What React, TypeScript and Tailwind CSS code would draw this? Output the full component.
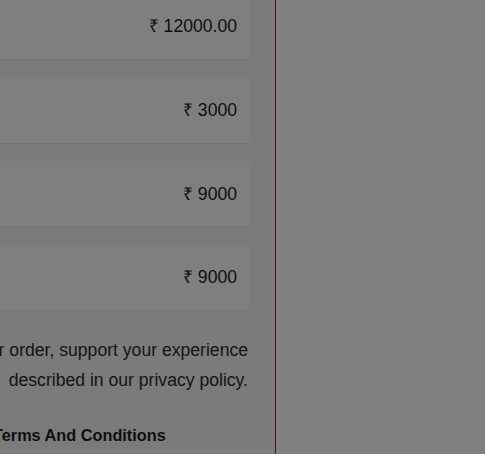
import React from "react";

const prices = ["₹ 12000.00", "₹ 3000", "₹ 9000", "₹ 9000"];

export default function App() {
  return (
    <div
      className="w-[485px] h-[454px] overflow-hidden bg-[#7f7f7f] flex"
      style={{ fontFamily: '"Liberation Sans", Arial, sans-serif' }}
    >
      <div className="w-[276px] shrink-0 h-full bg-[#7b7b7b] border-r border-[#5c0d14] flex flex-col">
        <div className="flex flex-col gap-[18.67px] -mt-[6px] mr-[25px]">
          {prices.map((p, i) => (
            <div
              key={i}
              className="h-[65px] bg-[#7f7f7f] shadow-[0_1px_1px_rgba(0,0,0,0.04)] flex items-center justify-end pr-[13px] text-[17.6px] text-[#0f0f0f]"
            >
              {p}
            </div>
          ))}
        </div>
        <div className="mt-[25px] mr-[27px] text-[17.6px] leading-[30px] text-[#141414] overflow-hidden">
          <div className="whitespace-nowrap flex justify-end">
            Your personal data will be used to process your order, support your experience
          </div>
          <div className="whitespace-nowrap flex justify-end">
            described in our privacy policy.
          </div>
        </div>
        <div className="mt-[28px] -ml-[7px] text-[16.3px] leading-[24px] font-bold text-[#0f0f0f] whitespace-nowrap">
          Terms And Conditions
        </div>
      </div>
      <div className="flex-1" />
    </div>
  );
}
